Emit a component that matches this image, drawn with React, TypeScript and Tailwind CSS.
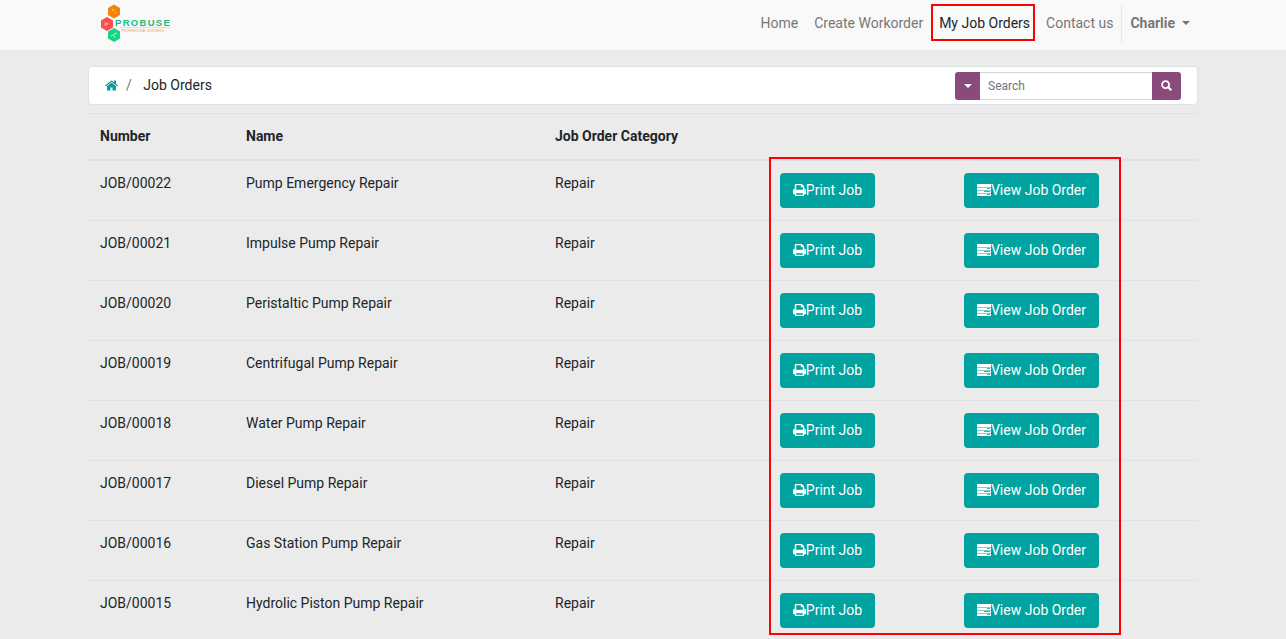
import React from "react";

const jobs = [
  { number: "JOB/00022", name: "Pump Emergency Repair" },
  { number: "JOB/00021", name: "Impulse Pump Repair" },
  { number: "JOB/00020", name: "Peristaltic Pump Repair" },
  { number: "JOB/00019", name: "Centrifugal Pump Repair" },
  { number: "JOB/00018", name: "Water Pump Repair" },
  { number: "JOB/00017", name: "Diesel Pump Repair" },
  { number: "JOB/00016", name: "Gas Station Pump Repair" },
  { number: "JOB/00015", name: "Hydrolic Piston Pump Repair" },
];

const navLinks = ["Home", "Create Workorder"];

const Logo = () => (
  <div className="relative h-[42px] w-[72px] shrink-0">
    <svg width="24" height="42" viewBox="0 0 24 42" className="absolute left-0 top-0">
      <polygon points="14,0.500 20,4 20,11 14,14.500 8,11 8,4" fill="#f5820d" />
      <polygon points="7,13 13,16.500 13,23.500 7,27 1,23.500 1,16.500" fill="#f4504c" />
      <polygon points="14,24 20,27.500 20,34.500 14,38 8,34.500 8,27.500" fill="#16d482" />
      <path d="M12 5l2 2M15 8l1 1M5 22l1-4M8 19l-1 2M11 32l6-3M14 32l1 2" stroke="#fff" strokeWidth="0.900" fill="none" opacity="0.800" />
    </svg>
    <span className="absolute left-[15px] top-[13px] font-['Liberation_Sans',sans-serif] text-[9.500px] leading-[11px] font-bold tracking-[1.300px] text-[#1fb77f] whitespace-nowrap">
      PROBUSE
    </span>
    <span className="absolute left-[20px] top-[23px] h-[1px] w-[51px] bg-[#dcdcdc]" />
    <span className="absolute left-[21px] top-[25px] font-['Liberation_Sans',sans-serif] text-[3.300px] leading-[5px] text-[#f5a35c] whitespace-nowrap">
      PROFESSIONAL BUSINESS
    </span>
  </div>
);

const HomeIcon = () => (
  <svg width="13" height="11" viewBox="0 0 1664 1408" fill="#0c9c9c">
    <path d="M1408 800v480q0 26-19 45t-45 19H960V960H704v384H320q-26 0-45-19t-19-45V800q0-1 .5-3t.5-3l575-474 575 474q1 2 1 6zM1631 731l-62 74q-8 9-21 11h-3q-13 0-21-7L832 231 140 809q-12 8-24 7-13-2-21-11l-62-74q-8-10-7-23.500T37 686L756 87q32-26 76-26t76 26l244 204V96q0-14 9-23t23-9h192q14 0 23 9t9 23v408l219 182q10 8 11 21.500t-7 23.500z" />
  </svg>
);

const PrintIcon = () => (
  <svg width="13" height="12" viewBox="0 0 1664 1536" fill="#fff" stroke="#fff" strokeWidth="50" className="shrink-0">
    <path d="M384 1408h896v-256H384v256zm0-640h896V384h-160q-40 0-68-28t-28-68V128H384v640zm1152 64q0-26-19-45t-45-19-45 19-19 45 19 45 45 19 45-19 19-45zm128 0v416q0 13-9.500 22.500T1632 1280h-224v160q0 40-28 68t-68 28H352q-40 0-68-28t-28-68v-160H32q-13 0-22.500-9.500T0 1248V832q0-79 56.500-135.500T192 640h64V96q0-40 28-68t68-28h672q40 0 88 20t76 48l152 152q28 28 48 76t20 88v256h64q79 0 135.500 56.500T1664 832z" />
  </svg>
);

const ListIcon = () => (
  <svg width="14" height="12" viewBox="0 0 14 12" className="shrink-0">
    <rect x="0" y="0" width="14" height="12" fill="#fff" />
    <rect x="0" y="3" width="14" height="0.500" fill="#00a3a0" />
    <rect x="10" y="4.200" width="3" height="0.800" fill="#00a3a0" />
    <rect x="0" y="6" width="14" height="0.500" fill="#00a3a0" />
    <rect x="7" y="7.200" width="6" height="0.800" fill="#00a3a0" />
    <rect x="0" y="9" width="14" height="0.500" fill="#00a3a0" />
    <rect x="10" y="10.200" width="3" height="0.800" fill="#00a3a0" />
  </svg>
);

const ActionButton = ({ icon, label, width }: { icon: React.ReactNode; label: string; width: string }) => (
  <a href="#" className={`${width} flex h-[35px] items-center justify-center rounded-[4px] bg-[#00a3a0] pb-[2px] text-[14px] leading-none text-white`}>
    {icon}
    {label}
  </a>
);

const cellClass = "h-[60px] border-b border-[#e0e0e8] px-3 pt-[11px] align-top leading-[22px]";
const actionCellClass = "h-[60px] border-b border-[#e0e0e8] px-3 align-middle";
const headClass = "h-[48px] border-t border-b-2 border-t-[#e0e0e8] border-b-[#e0e0e8] px-3 text-left font-bold";

export default function App() {
  return (
    <div className="relative min-h-[639px] overflow-hidden bg-[#ebebeb] font-['Roboto',sans-serif] text-[14px] text-[#212529]">
      <nav className="h-[50px] bg-[#f9f9f9]">
        <div className="mx-auto flex h-full w-[1110px] items-center justify-between">
          <div className="ml-[12px]">
            <Logo />
          </div>
          <div className="flex items-center pb-[3px] text-[#777777]">
            {navLinks.map((link) => (
              <a key={link} href="#" className="px-2 py-2">
                {link}
              </a>
            ))}
            <a href="#" className="relative px-2 py-2 text-[#212529]">
              My Job Orders
              <span className="absolute left-0 top-[-1px] h-[37px] w-[104px] border-2 border-[#f00]" />
            </a>
            <a href="#" className="px-2 py-2">
              Contact us
            </a>
            <div className="flex h-[37px] items-center border-l border-[#e6e6e6] px-2">
              <span className="font-bold">Charlie</span>
              <span className="ml-[7px] mt-[-1px] h-0 w-0 border-x-[4.500px] border-t-[4.500px] border-x-transparent border-t-[#777777]" />
            </div>
          </div>
        </div>
      </nav>

      <main className="mx-auto w-[1110px]">
        <div className="mt-[16px] flex h-[39px] items-center justify-between rounded-[4px] border border-[#dee2e6] bg-white pl-[16px] pr-[16px]">
          <div className="flex items-center">
            <HomeIcon />
            <span className="ml-[8px] text-[#6c757d]">/</span>
            <span className="ml-[11.500px]">Job Orders</span>
          </div>
          <div className="flex h-[28px] w-[226px]">
            <div className="flex w-[25px] items-center justify-center rounded-l-[3px] bg-[#8a4b7c]">
              <span className="h-0 w-0 border-x-[4px] border-t-[4px] border-x-transparent border-t-white" />
            </div>
            <div className="flex flex-1 items-center border-y border-[#ced4da] bg-white pl-[8px] text-[12px] text-[#6c757d]">
              Search
            </div>
            <div className="flex w-[29px] items-center justify-center rounded-r-[3px] bg-[#8a4b7c]">
              <svg width="11" height="11" viewBox="0 0 11 11" fill="none" stroke="#fff" strokeWidth="1.800">
                <circle cx="4.600" cy="4.600" r="3.500" />
                <path d="M7.300 7.300L10.300 10.300" strokeWidth="2.200" />
              </svg>
            </div>
          </div>
        </div>

        <table className="mt-[8px] w-[1110px] table-fixed border-separate border-spacing-0">
          <thead>
            <tr>
              <th className={`${headClass} w-[146px]`}>Number</th>
              <th className={`${headClass} w-[309px]`}>Name</th>
              <th className={`${headClass} w-[225px]`}>Job Order Category</th>
              <th className={`${headClass} w-[184px]`} />
              <th className={headClass} />
            </tr>
          </thead>
          <tbody>
            {jobs.map((job) => (
              <tr key={job.number}>
                <td className={cellClass}>{job.number}</td>
                <td className={cellClass}>{job.name}</td>
                <td className={cellClass}>Repair</td>
                <td className={actionCellClass}>
                  <ActionButton icon={<PrintIcon />} label="Print Job" width="w-[95px]" />
                </td>
                <td className={actionCellClass}>
                  <ActionButton icon={<ListIcon />} label="View Job Order" width="w-[135px]" />
                </td>
              </tr>
            ))}
          </tbody>
        </table>
      </main>

      <div className="pointer-events-none absolute left-[769px] top-[157px] h-[478px] w-[352px] border-2 border-[#f00]" />
    </div>
  );
}
